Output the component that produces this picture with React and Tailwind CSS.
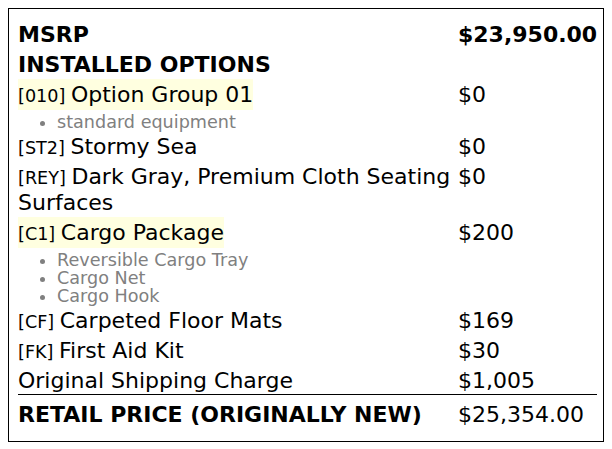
const rows = [
  { code: '010', name: 'Option Group 01', price: '$0', mark: true, items: ['standard equipment'] },
  { code: 'ST2', name: 'Stormy Sea', price: '$0' },
  { code: 'REY', name: 'Dark Gray, Premium Cloth Seating Surfaces', price: '$0' },
  { code: 'C1', name: 'Cargo Package', price: '$200', mark: true, items: ['Reversible Cargo Tray', 'Cargo Net', 'Cargo Hook'] },
  { code: 'CF', name: 'Carpeted Floor Mats', price: '$169' },
  { code: 'FK', name: 'First Aid Kit', price: '$30' },
  { name: 'Original Shipping Charge', price: '$1,005' },
];

export default function App() {
  return (
    <div
      className="m-2 w-[596px] border border-black bg-white pt-[13px] pb-[13px] pl-[9px] pr-2 text-[22px] leading-[26px] text-black"
      style={{ fontFamily: '"DejaVu Sans", sans-serif' }}
    >
      <div className="grid grid-cols-[440px_1fr] gap-y-1">
        <div className="font-bold">MSRP</div>
        <div className="font-bold">$23,950.00</div>
        <div className="col-span-2 font-bold">INSTALLED OPTIONS</div>

        {rows.map((r, i) => (
          <div key={i} className="contents">
            <div className="pr-1">
              <span className={r.mark ? 'bg-[#ffffe0] py-[3px]' : ''}>
                {r.code && <span className="text-[17.6px] leading-none">[{r.code}] </span>}
                {r.name}
              </span>
              {r.items && (
                <ul className="mb-[-1px] list-disc pl-[39px] pt-[5px] text-[17.6px] leading-[18px] text-[#808080] marker:text-[#808080]">
                  {r.items.map((it) => (
                    <li key={it}>{it}</li>
                  ))}
                </ul>
              )}
            </div>
            <div>{r.price}</div>
          </div>
        ))}

        <div className="col-span-2 mt-[-4px] grid grid-cols-[440px_1fr] border-t border-black pt-[7px]">
          <div className="font-bold">RETAIL PRICE (ORIGINALLY NEW)</div>
          <div>$25,354.00</div>
        </div>
      </div>
    </div>
  );
}
